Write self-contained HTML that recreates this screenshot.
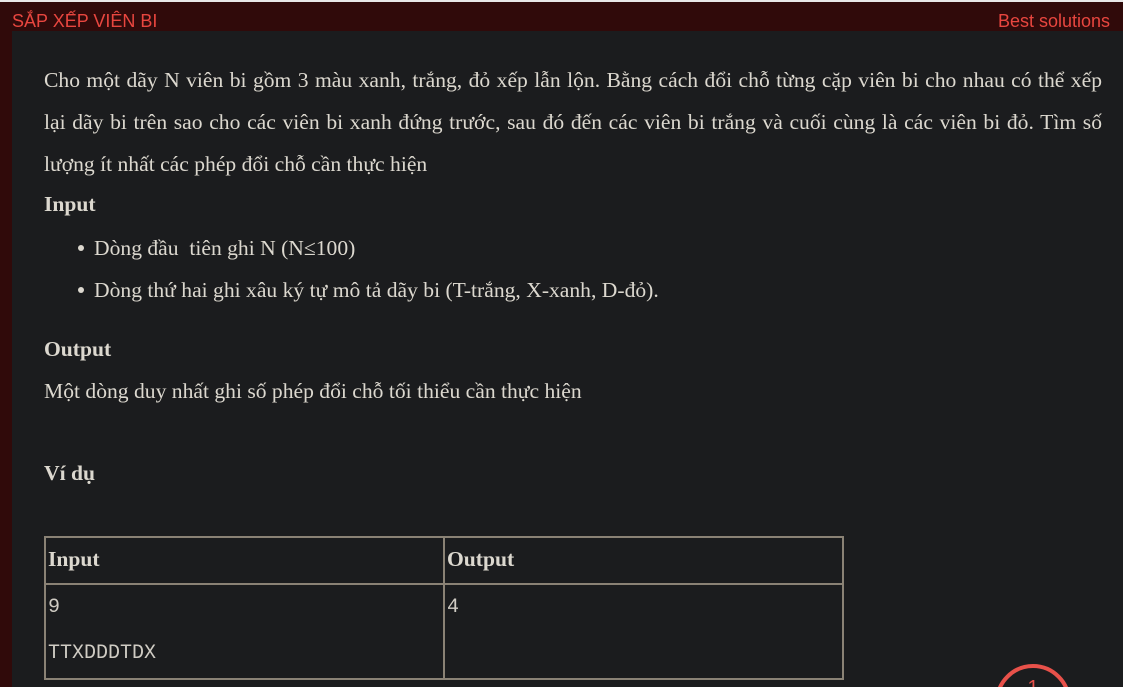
<!DOCTYPE html>
<html><head><meta charset="utf-8"><style>
html,body{margin:0;padding:0;width:1123px;height:687px;overflow:hidden;background:#300a0a;}
.wrap{position:absolute;left:0;top:0;width:1123px;height:687px;overflow:hidden;}
.top{position:absolute;left:0;top:0;width:1123px;height:2px;background:#e8e8e8;}
.title{position:absolute;left:12px;top:11px;font:18px "Liberation Sans",sans-serif;color:#e8463f;}
.best{position:absolute;right:13px;top:11px;font:18px "Liberation Sans",sans-serif;color:#e8463f;}
.panel{position:absolute;left:12px;top:31px;width:1111px;height:656px;background:#1b1c1e;color:#dcd8cf;font:21.6px "Liberation Serif",serif;}
.p{position:absolute;left:32px;width:1058px;line-height:42px;}
.j{display:block;text-align:justify;text-align-last:justify;}
b{font-weight:bold;}
ul{margin:0;padding:0;}
li{position:absolute;left:82px;list-style:none;white-space:nowrap;}
li:before{content:"";position:absolute;left:-16px;top:18px;width:6px;height:6px;border-radius:3px;background:#dcd8cf;}
table{position:absolute;left:32px;top:505px;border-collapse:collapse;}
td{border:2px solid #8a8275;vertical-align:top;padding:0 2px;}
.mono{font:20px "Liberation Mono",monospace;color:#d0ccc4;}
.circ{position:absolute;left:995px;top:664px;width:68px;height:68px;border:4px solid #e8514a;border-radius:50%;color:#e8514a;font:20px "Liberation Sans",sans-serif;text-align:center;line-height:40px;}
</style></head><body><div class="wrap">
<div class="top"></div>
<div class="title">SẮP XẾP VIÊN BI</div>
<div class="best">Best solutions</div>
<div class="panel">
<div class="p" style="top:28px;text-align:justify"><span class="j">Cho một dãy N viên bi gồm 3 màu xanh, trắng, đỏ xếp lẫn lộn. Bằng cách đổi chỗ từng cặp viên bi cho nhau có thể xếp</span>lại dãy bi trên sao cho các viên bi xanh đứng trước, sau đó đến các viên bi trắng và cuối cùng là các viên bi đỏ. Tìm số lượng ít nhất các phép đổi chỗ cần thực hiện</div>
<div class="p" style="top:152px"><b>Input</b></div>
<ul><li style="top:196px;line-height:42px">Dòng đầu &nbsp;tiên ghi N (N≤100)</li>
<li style="top:238px;line-height:42px">Dòng thứ hai ghi xâu ký tự mô tả dãy bi (T-trắng, X-xanh, D-đỏ).</li></ul>
<div class="p" style="top:297px"><b>Output</b></div>
<div class="p" style="top:339px">Một dòng duy nhất ghi số phép đổi chỗ tối thiểu cần thực hiện</div>
<div class="p" style="top:421px"><b>Ví dụ</b></div>
<table>
<tr style="height:47px"><td style="width:393px;line-height:42px"><b>Input</b></td><td style="width:393px;line-height:42px"><b>Output</b></td></tr>
<tr style="height:95px"><td class="mono" style="line-height:46px;padding-top:0">9<br>TTXDDDTDX</td><td class="mono" style="line-height:46px;padding-top:0">4</td></tr>
</table>
</div>
<div class="circ">1</div>
</div></body></html>
